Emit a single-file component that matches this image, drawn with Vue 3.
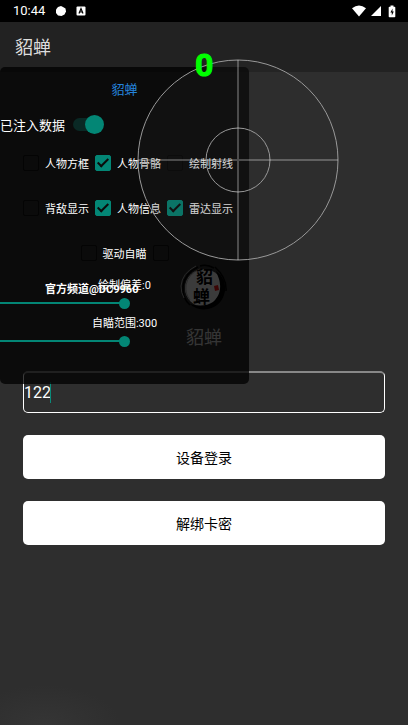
<script setup>
import { computed, ref } from "vue";

const cardKey = ref("122");
const injected = ref(true);
const channel = "官方频道@DC9960";
const targetCount = ref(0);

const options = ref([
  { id: "box", label: "人物方框", checked: false },
  { id: "bone", label: "人物骨骼", checked: true },
  { id: "ray", label: "绘制射线", checked: false },
  { id: "back", label: "背敌显示", checked: false },
  { id: "info", label: "人物信息", checked: true },
  { id: "radar", label: "雷达显示", checked: true },
]);
const driverAim = ref(false);
const extraAim = ref(false);

const offset = ref(0);
const range = ref(300);
const offsetPercent = computed(() => (Number(offset.value) + 100) / 2 + "%");
const rangePercent = computed(() => Number(range.value) / 6 + "%");
</script>

<template>
  <div class="page">
    <div class="status-bar">
      <span class="time">10:44</span>
      <svg class="dot" width="12" height="12" viewBox="0 0 12 12">
        <path d="M6 1 L8 2 L10.5 3.5 L11 6.5 L9.5 9.5 L6.5 11 L3 10.5 L1 8 L1 4.5 L3 2Z" />
      </svg>
      <svg class="lang" width="10" height="10" viewBox="0 0 10 10">
        <rect x="0.5" y="0.5" width="9" height="9" rx="1" />
        <path d="M3 7.5 L5 2.5 L7 7.5 M3.7 6 H6.3" fill="none" stroke="#000" stroke-width="1.2" />
      </svg>
      <div class="status-right">
        <svg width="16" height="12" viewBox="0 0 16 12">
          <path d="M1 3.2 Q8 -2 15 3.2 L8 11.5Z" />
        </svg>
        <svg width="12" height="12" viewBox="0 0 12 12">
          <path d="M11 1 V11 H1Z" />
        </svg>
        <svg class="battery" width="8" height="13" viewBox="0 0 8 13">
          <path d="M2.5 0.5 H5.5 V1.8 H6.5 Q7.3 1.8 7.3 2.6 V11.5 Q7.3 12.3 6.5 12.3 H1.5 Q0.7 12.3 0.7 11.5 V2.6 Q0.7 1.8 1.5 1.8 H2.5Z" />
          <path d="M4.6 3.5 L2.4 7.5 H3.8 V10.5 L5.8 6.4 H4.4Z" fill="#000" />
        </svg>
      </div>
    </div>

    <header class="app-bar">貂蝉</header>

    <main class="login">
      <svg class="logo" width="48" height="48" viewBox="0 0 48 48">
        <circle cx="24" cy="24" r="19" fill="#f4f4f4" />
        <path d="M36 7 Q46 14 45 27 Q42 42 28 45 Q17 47 10 40 Q24 44 33 38 Q43 29 39 15Z" fill="#000" />
        <path d="M18 3 Q5 9 3 22 Q2 34 10 41" fill="none" stroke="#000" stroke-width="1.5" />
        <path d="M16 2 Q2 9 1 22 Q1 29 4 34 M20 5 Q8 10 6 21 Q5 30 10 36" fill="none" stroke="#aaa" stroke-width="1" />
        <path d="M35 3 Q47 14 46 27 M20 2 Q27 0 34 4" fill="none" stroke="#000" stroke-width="1.5" />
        <text x="16" y="19" class="logo-text">貂</text>
        <text x="13" y="39" class="logo-text">蝉</text>
        <path d="M34 22 L38 21 L39 26 L35 27Z" fill="#f01818" />
      </svg>
      <h1 class="login-title">貂蝉</h1>
      <div class="key-field">
        <input v-model="cardKey" class="key-input" type="text" aria-label="卡密" />
        <span class="caret"></span>
      </div>
      <button class="btn" type="button">设备登录</button>
      <button class="btn" type="button">解绑卡密</button>
    </main>

    <!-- 悬浮菜单 -->
    <section class="panel">
      <h2 class="panel-title">貂蝉</h2>
      <label class="switch-row">
        <span>已注入数据</span>
        <input v-model="injected" class="switch" type="checkbox" />
      </label>
      <div class="options">
        <label v-for="item in options" :key="item.id" class="option">
          <input v-model="item.checked" class="check" type="checkbox" />
          <span>{{ item.label }}</span>
        </label>
      </div>
      <div class="aim-row">
        <label class="option">
          <input v-model="driverAim" class="check" type="checkbox" />
          <span>驱动自瞄</span>
        </label>
        <input v-model="extraAim" class="check" type="checkbox" aria-label="自瞄" />
      </div>
      <label class="slider-label" for="offset">绘制偏差:{{ offset }}</label>
      <input id="offset" v-model="offset" class="slider" type="range" min="-100" max="100" :style="{ '--fill': offsetPercent }" />
      <label class="slider-label" for="range">自瞄范围:{{ range }}</label>
      <input id="range" v-model="range" class="slider" type="range" min="0" max="600" :style="{ '--fill': rangePercent }" />
    </section>

    <!-- 雷达 -->
    <svg class="radar" width="202" height="202" viewBox="0 0 202 202">
      <circle cx="101" cy="101" r="100" fill="#2e2e2e" fill-opacity="0.2" stroke="#999" />
      <circle cx="101" cy="101" r="32" fill="none" stroke="#999" />
      <path d="M101 1 V201 M1 101 H201" stroke="#fff" stroke-opacity="0.25" stroke-width="2" />
    </svg>
    <span class="count">{{ targetCount }}</span>
    <span class="channel">{{ channel }}</span>
  </div>
</template>

<style>
body {
  background: #2e2e2e;
}
</style>

<style scoped>
.page {
  position: relative;
  min-height: 100vh;
  overflow: hidden;
  color: #fff;
  background: radial-gradient(ellipse 75px 40px at 45px 100%, #353535, #2e2e2e);
  font-family: Roboto, "Noto Sans CJK SC", sans-serif;
}
.status-bar {
  display: flex;
  align-items: center;
  height: 22px;
  padding: 0 12px 0 13px;
  background: #000;
  fill: #fff;
}
.time {
  font-size: 13px;
  line-height: 22px;
}
.dot {
  margin-left: 10px;
}
.lang {
  margin-left: 9px;
}
.status-right {
  display: flex;
  align-items: center;
  gap: 3px;
  margin-left: auto;
}
.battery {
  margin-left: 3px;
}
.app-bar {
  box-sizing: border-box;
  height: 50px;
  padding: 2px 0 0 15px;
  background: #222;
  color: #ddd;
  font-size: 18px;
  line-height: 48px;
}
.login {
  display: flex;
  flex-direction: column;
  align-items: center;
  padding: 192px 23px 0;
}
.logo-text {
  font-family: "Noto Sans CJK SC", sans-serif;
  font-size: 17px;
  font-weight: 700;
}
.login-title {
  margin: 13px 0 20px;
  color: #ddd;
  font-size: 18px;
  font-weight: 400;
  line-height: 26px;
}
.key-field {
  position: relative;
  width: 100%;
  margin-bottom: 22px;
}
.key-input {
  display: block;
  box-sizing: border-box;
  width: 100%;
  height: 42px;
  padding: 0;
  border: 1px solid #fff;
  border-top: 2px solid #888;
  border-radius: 5px;
  outline: none;
  background: transparent;
  color: #fff;
  caret-color: #0a8a7a;
  font-family: inherit;
  font-size: 16px;
}
.caret {
  position: absolute;
  top: 11px;
  left: 27px;
  width: 1px;
  height: 21px;
  background: #0a8a7a;
}
.btn {
  width: 100%;
  height: 44px;
  margin-bottom: 22px;
  padding: 0 0 1px;
  border: none;
  border-radius: 5px;
  background: #fff;
  color: #000;
  font-family: inherit;
  font-size: 14px;
}
.panel {
  position: absolute;
  top: 67px;
  left: 0;
  box-sizing: border-box;
  width: 249px;
  padding-bottom: 31px;
  border-radius: 5px;
  background: rgba(0, 0, 0, 0.76);
  font-size: 11px;
}
.panel-title {
  margin: 0;
  color: #2583dc;
  font-size: 13px;
  font-weight: 400;
  line-height: 46px;
  text-align: center;
}
.switch-row {
  display: flex;
  align-items: center;
  gap: 8px;
  height: 23px;
  margin-bottom: 4px;
  font-size: 13px;
}
.switch {
  position: relative;
  width: 30px;
  height: 13px;
  margin: 0;
  border-radius: 7px;
  appearance: none;
  background: #0a2925;
}
.switch::before {
  content: "";
  position: absolute;
  top: -3px;
  left: 0;
  width: 19px;
  height: 19px;
  border-radius: 50%;
  background: #555;
}
.switch:checked::before {
  left: 12px;
  background: #038675;
}
.options {
  display: grid;
  grid-template-columns: repeat(3, 66px);
  column-gap: 6px;
  padding-left: 23px;
}
.option {
  display: flex;
  align-items: center;
  gap: 6px;
  height: 45px;
  white-space: nowrap;
}
.aim-row {
  display: flex;
  align-items: center;
  justify-content: center;
  gap: 6px;
  margin-bottom: 2px;
}
.check {
  position: relative;
  box-sizing: border-box;
  flex: none;
  width: 16px;
  height: 16px;
  margin: 0;
  border: 1px solid #040404;
  border-radius: 2px;
  appearance: none;
}
.check:checked {
  border-color: #038675;
  background: #038675;
}
.check:checked::before {
  content: "";
  position: absolute;
  top: 0;
  left: 4px;
  width: 4px;
  height: 9px;
  border: solid #0b0b0b;
  border-width: 0 2px 2px 0;
  transform: rotate(45deg);
}
.slider-label {
  display: block;
  line-height: 18px;
  text-align: center;
}
.slider {
  display: block;
  width: 100%;
  height: 16px;
  margin: 0 0 4px;
  appearance: none;
  background: linear-gradient(#038675, #038675) 0 50% / var(--fill) 2px no-repeat;
}
.slider::-webkit-slider-thumb {
  width: 11px;
  height: 11px;
  border-radius: 50%;
  appearance: none;
  background: #038675;
}
.radar {
  position: absolute;
  top: 59px;
  left: 137px;
  pointer-events: none;
}
.count {
  position: absolute;
  top: 44px;
  left: 195px;
  color: #0f0;
  font-size: 32px;
  font-weight: 700;
  line-height: 42px;
  -webkit-text-stroke: 1px #0f0;
}
.channel {
  position: absolute;
  top: 282px;
  left: 45px;
  font-size: 11px;
  font-weight: 700;
  line-height: 16px;
}
</style>
